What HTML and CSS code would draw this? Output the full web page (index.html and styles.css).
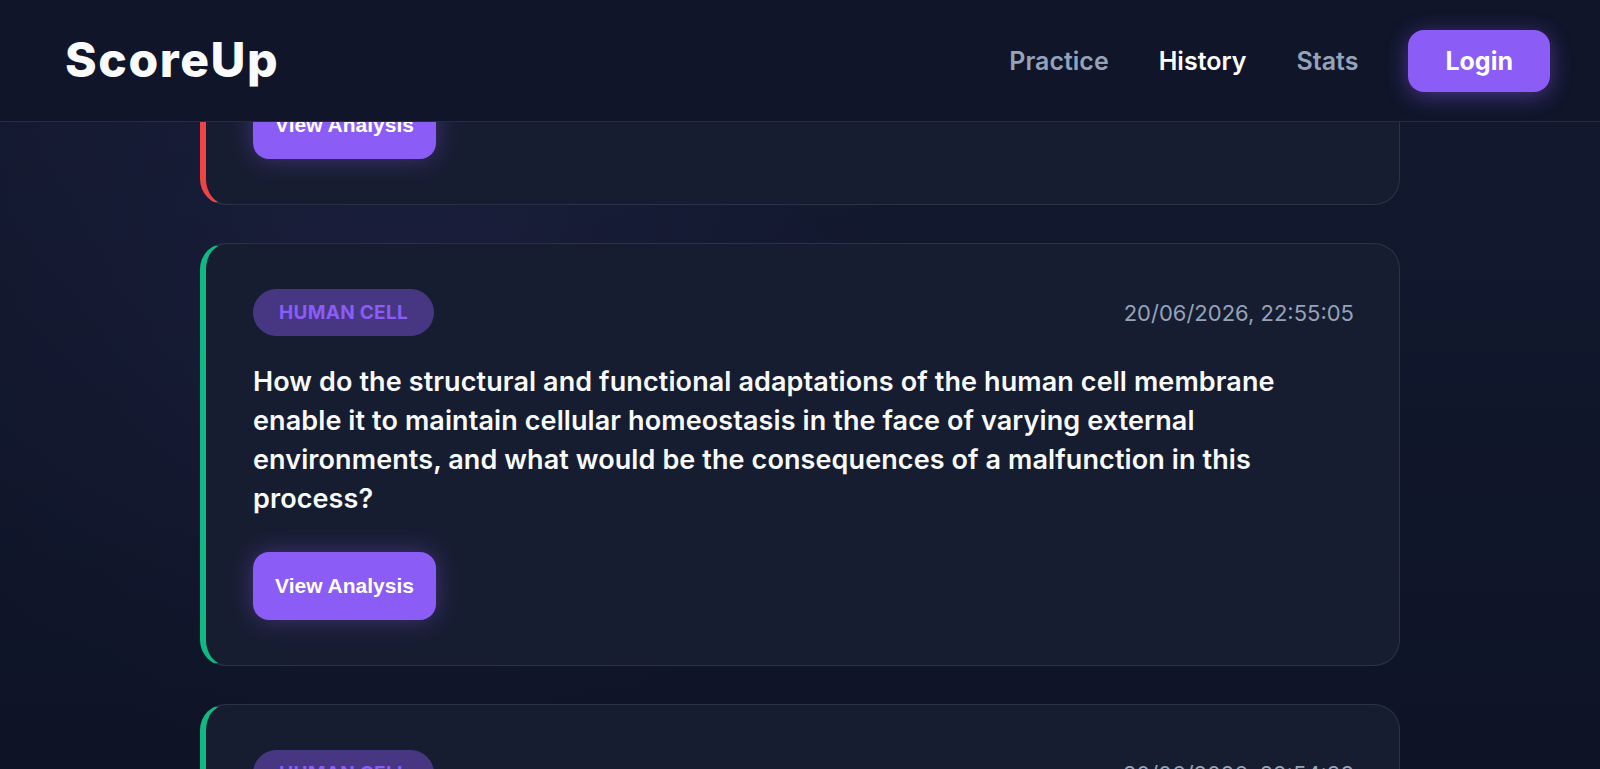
FILE: index.html
```html
<!DOCTYPE html>
<html>
<head>
    <title>ScoreUp - History</title>
    <link rel="stylesheet" href="styles.css">
</head>
<body>

    <header class="topbar">
        <a class="logo" href="/">ScoreUp</a>
        <nav class="nav">
            <a href="/practice" class="nav-link">Practice</a>
            <a href="/history" class="nav-link active">History</a>
            <a href="/stats" class="nav-link">Stats</a>
            <button class="login-btn">Login</button>
        </nav>
    </header>

    <main class="history">

        <div class="attempt wrong">
            <div class="attempt-top">
                <span class="topic">Human Cell</span>
                <span class="when">20/06/2026, 22:58:41</span>
            </div>
            <p class="question">Explain how the organisation of the cytoskeleton supports intracellular transport and cell shape in human cells, and describe what would happen to the cell, and to the tissue around it, if microtubule assembly were disrupted during mitosis and cytokinesis.</p>
            <button class="analysis-btn">View Analysis</button>
        </div>

        <div class="attempt correct">
            <div class="attempt-top">
                <span class="topic">Human Cell</span>
                <span class="when">20/06/2026, 22:55:05</span>
            </div>
            <p class="question">How do the structural and functional adaptations of the human cell membrane enable it to maintain cellular homeostasis in the face of varying external environments, and what would be the consequences of a malfunction in this process?</p>
            <button class="analysis-btn">View Analysis</button>
        </div>

        <div class="attempt correct">
            <div class="attempt-top">
                <span class="topic">Human Cell</span>
                <span class="when">20/06/2026, 22:54:38</span>
            </div>
            <p class="question">Compare the roles of the rough and smooth endoplasmic reticulum in protein and lipid synthesis, and explain how they work together with the Golgi apparatus.</p>
            <button class="analysis-btn">View Analysis</button>
        </div>

    </main>

    <script>
        window.addEventListener("load", () => {
            window.scrollTo(0, 378);
        });
    </script>

</body>
</html>
```

FILE: styles.css
```css
html {
  scrollbar-width: none;
}

body {
  margin: 0;
  min-height: 100vh;
  background-color: #10152a;
  background-image:
    radial-gradient(circle at 25% 35%, rgba(99, 80, 180, 0.10), transparent 40%),
    linear-gradient(180deg, #131a30 0%, #0e1326 100%);
  background-attachment: fixed;
  color: #f1f5f9;
  font-family: "Inter", "Noto Sans", sans-serif;
}

a {
  text-decoration: none;
}

.topbar {
  position: fixed;
  top: 0;
  left: 0;
  right: 0;
  z-index: 10;
  height: 122px;
  box-sizing: border-box;
  padding: 0 50px 0 65px;
  display: flex;
  align-items: center;
  justify-content: space-between;
  background-color: #10152a;
  border-bottom: 1px solid rgba(148, 163, 184, 0.16);
}

.logo {
  color: #f8fafc;
  font-size: 48px;
  font-weight: 800;
  letter-spacing: 1.6px;
  margin-top: -2px;
}

.nav {
  display: flex;
  align-items: center;
  gap: 50px;
}

.nav-link {
  color: #94a3b8;
  font-size: 25px;
  font-weight: 600;
}

.nav-link.active {
  color: #ffffff;
}

.login-btn {
  height: 62px;
  padding: 0 37px;
  border: 0;
  border-radius: 16px;
  background-color: #8b5cf6;
  color: #ffffff;
  font-family: inherit;
  font-size: 25px;
  font-weight: 700;
  cursor: pointer;
  box-shadow: 0 4px 22px rgba(139, 92, 246, 0.45);
}

.history {
  max-width: 1200px;
  margin: 0 auto;
  padding: 160px 0 80px;
  display: flex;
  flex-direction: column;
  gap: 38px;
}

.attempt {
  background-color: #171d31;
  border: 1px solid rgba(148, 163, 184, 0.16);
  border-left: 6px solid #10b981;
  border-radius: 26px;
  padding: 45px 45px 45px 47px;
}

.attempt.wrong {
  border-left-color: #ef4444;
}

.attempt.correct {
  border-left-color: #10b981;
}

.attempt-top {
  display: flex;
  align-items: center;
  justify-content: space-between;
}

.topic {
  display: inline-block;
  padding: 12px 26px;
  border-radius: 999px;
  background-color: rgba(139, 92, 246, 0.42);
  color: #8b5cf6;
  font-size: 19px;
  font-weight: 700;
  letter-spacing: 0.3px;
  text-transform: uppercase;
}

.when {
  color: #94a3b8;
  font-size: 22px;
}

.question {
  margin: 26px 0 34px;
  font-size: 27px;
  font-weight: 600;
  line-height: 39px;
  letter-spacing: 0.1px;
  color: #f8fafc;
}

.analysis-btn {
  height: 68px;
  padding: 0 22px;
  border: 0;
  border-radius: 16px;
  background-color: #8b5cf6;
  color: #ffffff;
  font-family: "Liberation Sans", Arial, sans-serif;
  font-size: 21px;
  font-weight: 700;
  cursor: pointer;
  box-shadow: 0 0 24px rgba(139, 92, 246, 0.35);
}

.analysis-btn:active {
  background-color: #7c3aed;
}
```
